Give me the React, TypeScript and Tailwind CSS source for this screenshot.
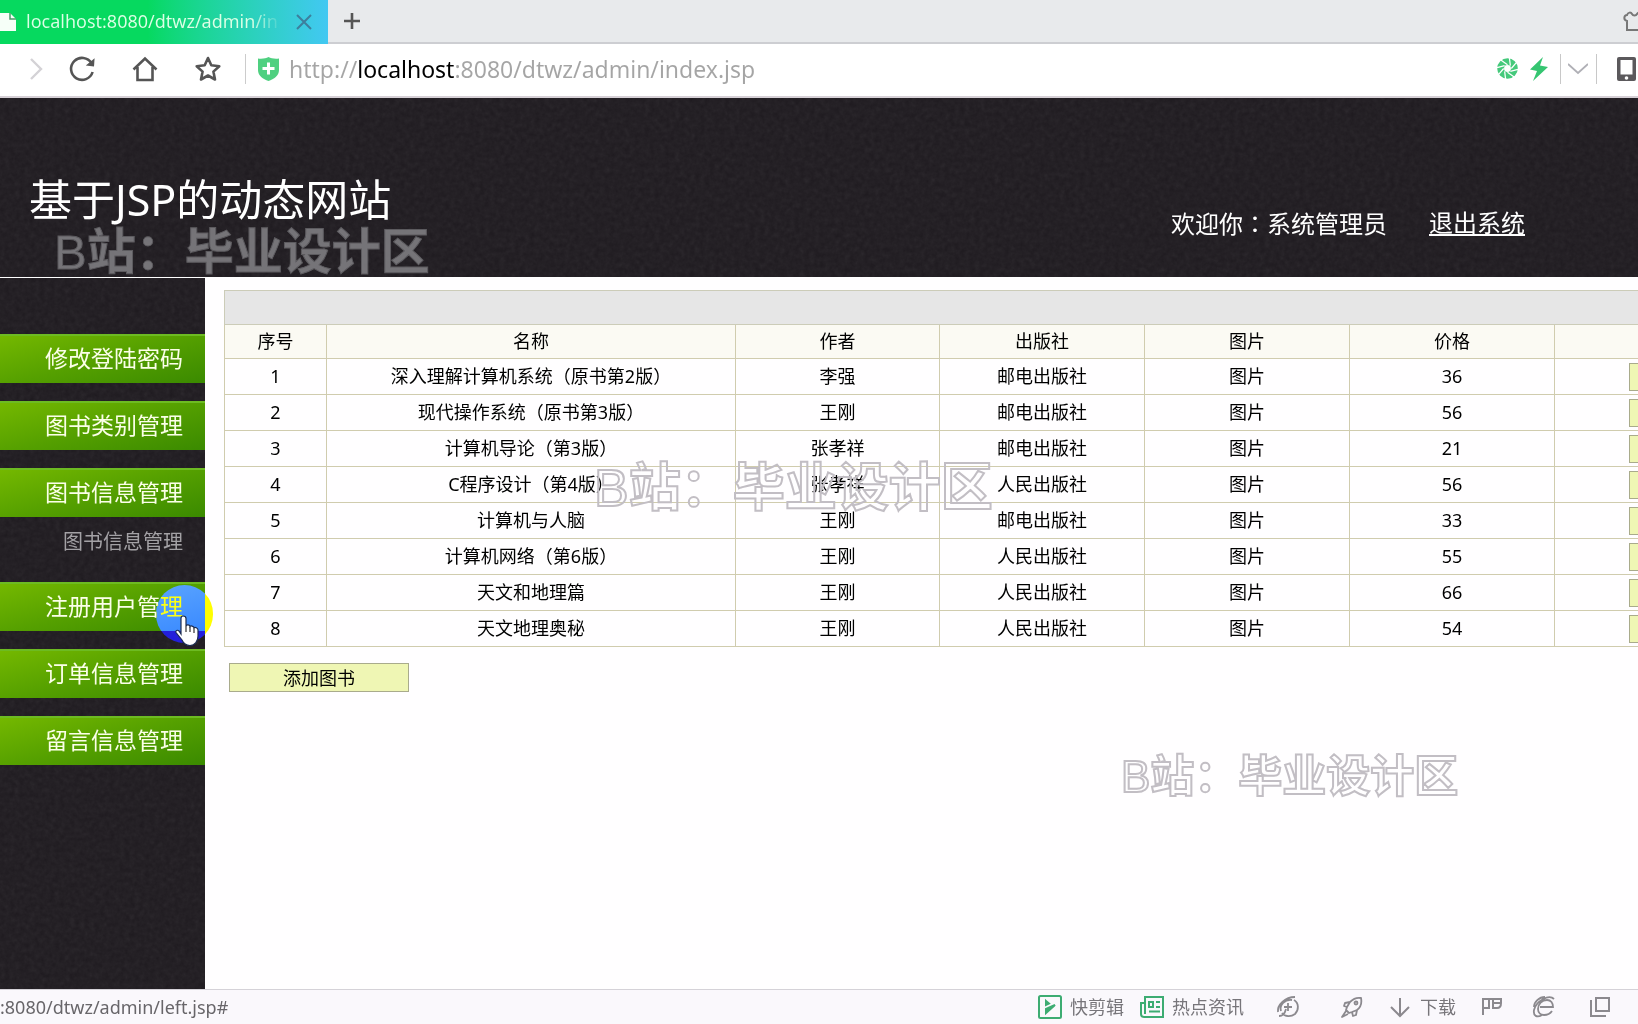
import React from "react";

const menus = [
  { title: "修改登陆密码", children: [] },
  { title: "图书类别管理", children: [] },
  { title: "图书信息管理", children: ["图书信息管理"] },
  { title: "注册用户管理", children: [] },
  { title: "订单信息管理", children: [] },
  { title: "留言信息管理", children: [] },
];

const books = [
  { id: 1, name: "深入理解计算机系统（原书第2版）", author: "李强", press: "邮电出版社", price: 36 },
  { id: 2, name: "现代操作系统（原书第3版）", author: "王刚", press: "邮电出版社", price: 56 },
  { id: 3, name: "计算机导论（第3版）", author: "张孝祥", press: "邮电出版社", price: 21 },
  { id: 4, name: "C程序设计（第4版）", author: "张孝祥", press: "人民出版社", price: 56 },
  { id: 5, name: "计算机与人脑", author: "王刚", press: "邮电出版社", price: 33 },
  { id: 6, name: "计算机网络（第6版）", author: "王刚", press: "人民出版社", price: 55 },
  { id: 7, name: "天文和地理篇", author: "王刚", press: "人民出版社", price: 66 },
  { id: 8, name: "天文地理奥秘", author: "王刚", press: "人民出版社", price: 54 },
];

const Texture = ({ id }: { id: string }) => (
  <svg className="pointer-events-none absolute inset-0 h-full w-full opacity-[0.08]" aria-hidden="true">
    <filter id={id}>
      <feTurbulence type="fractalNoise" baseFrequency="0.2" numOctaves="3" seed="4" />
      <feColorMatrix type="saturate" values="0" />
    </filter>
    <rect width="100%" height="100%" filter={`url(#${id})`} />
  </svg>
);

const TabBar = () => (
  <div className="flex h-11 items-stretch border-b-2 border-[#cdced2] bg-[#e8eaec]">
    <div className="-mb-0.5 flex w-[328px] shrink-0 items-center bg-linear-to-r from-[#06d95f] from-45% to-[#42c8f2]">
      <svg className="h-[18px] w-4 shrink-0" viewBox="0 0 16 18">
        <path d="M0 0h10l6 6v12H0z" fill="#f6fff8" />
        <path d="M10 0v6h6" fill="none" stroke="#4a9a68" strokeWidth="1.5" />
      </svg>
      <span className="ml-2.5 w-[256px] overflow-hidden whitespace-nowrap bg-linear-to-r from-[#dcffe6] from-88% to-transparent bg-clip-text pb-0.5 text-[18px] leading-7 text-transparent">
        localhost:8080/dtwz/admin/in
      </span>
      <button className="ml-3.5 h-4 w-4" aria-label="关闭标签">
        <svg viewBox="0 0 16 16" fill="none" stroke="#3d7f9c" strokeWidth="2">
          <path d="M1 1l14 14M15 1L1 15" />
        </svg>
      </button>
    </div>
    <button className="ml-4 self-center" aria-label="新建标签">
      <svg className="h-4 w-4" viewBox="0 0 16 16" stroke="#555" strokeWidth="2.6">
        <path d="M8 0v16M0 8h16" />
      </svg>
    </button>
    <button className="ml-auto w-[15px] self-center overflow-hidden" aria-label="皮肤">
      <svg className="h-6 w-6 max-w-none" viewBox="0 0 24 24" fill="none" stroke="#777" strokeWidth="2">
        <path d="M9 5C8 3 5 3 4 6c-3 0-4 5 0 6v9h15v-9c4-1 3-6 0-6-1-3-4-3-5-1-1 2-4 2-5 0z" />
      </svg>
    </button>
  </div>
);

const AddressBar = () => (
  <div className="flex h-[54px] items-center border-b-2 border-[#d6d0d6] bg-white pb-[3px]">
    <button className="ml-6 h-6 w-6" aria-label="前进">
      <svg viewBox="0 0 24 24" fill="none" stroke="#d4d2d6" strokeWidth="2.4">
        <path d="M7 2l10 10L7 22" />
      </svg>
    </button>
    <button className="ml-5 h-7 w-7" aria-label="刷新">
      <svg viewBox="0 0 28 28" fill="none" stroke="#555" strokeWidth="2.6">
        <path d="M23.5 8.2A11 11 0 1 0 24.6 17" />
        <path d="M26.6 3.2l-.6 8.2-8.2-.8z" fill="#555" stroke="none" />
      </svg>
    </button>
    <button className="ml-[35px] h-7 w-7" aria-label="主页">
      <svg viewBox="0 0 28 28" fill="none" stroke="#555" strokeWidth="2.6">
        <path d="M2.5 14.5L14 3.5l11.5 11M6.5 12v13h15V12" />
      </svg>
    </button>
    <button className="ml-[35px] h-7 w-7" aria-label="收藏">
      <svg viewBox="0 0 28 28" fill="none" stroke="#555" strokeWidth="2.6" strokeLinejoin="round">
        <path d="M14 3l3.3 7.3 8 .9-5.900 5.400 1.600 7.900-7-4-7 4 1.600-7.900-5.900-5.400 8-.9z" />
      </svg>
    </button>
    <span className="ml-[23px] h-[30px] w-px bg-[#ccc]" />
    <svg className="ml-3 h-6 w-[21px]" viewBox="0 0 21 24">
      <path d="M0 1.5C4 2 8 1.5 10.5 0 13 1.5 17 2 21 1.5V13c0 6-5 9-10.5 11C5 22 0 19 0 13z" fill="#4fd080" />
      <path d="M10.5 5.500v12M4.500 11.500h12" stroke="#fff" strokeWidth="3" />
    </svg>
    <input
      aria-label="地址"
      type="text"
      defaultValue="http://localhost:8080/dtwz/admin/index.jsp"
      className="ml-2.5 min-w-0 flex-1 bg-[linear-gradient(90deg,#a5a5a5_69px,#000_69px,#000_167px,#a5a5a5_167px)] bg-clip-text text-[23px] leading-8 text-transparent outline-none"
    />
    <svg className="h-[21px] w-[21px] shrink-0" viewBox="0 0 22 22" fill="none">
      <circle cx="11" cy="11" r="7.2" stroke="#45c97b" strokeWidth="7.2" />
      <path
        d="M11 7L4 2M14 8L13 0M15 11l5-6M14 14l8-2M11 15l7 5M8 14l1 8M7 11l-5 6M8 8L0 10"
        stroke="#fff"
        strokeWidth="1.3"
      />
    </svg>
    <svg className="ml-3 h-6 w-[18px] shrink-0" viewBox="0 0 18 24">
      <path d="M13 0L0 12.500l7 1.500L3 24l15-14-8-1.500z" fill="#35c571" />
    </svg>
    <span className="ml-3 h-[30px] w-px shrink-0 bg-[#c8c8c8]" />
    <button className="ml-[7px] h-5 w-5 shrink-0" aria-label="展开">
      <svg viewBox="0 0 20 20" fill="none" stroke="#b0b0b6" strokeWidth="1.8">
        <path d="M0 5l10 9 10-9" />
      </svg>
    </button>
    <span className="ml-2 h-[30px] w-px shrink-0 bg-[#c8c8c8]" />
    <button className="ml-5 mr-0.5 shrink-0" aria-label="手机">
      <svg className="h-6 w-[19px]" viewBox="0 0 19 24">
        <rect width="19" height="24" rx="2" fill="#5b595c" />
        <path d="M3.500 3h12v14.500h-12z" fill="#fff" />
        <circle cx="9.500" cy="21" r="1.800" fill="#fff" />
      </svg>
    </button>
  </div>
);

const Watermark = ({ className }: { className: string }) => (
  <div
    className={`pointer-events-none absolute whitespace-nowrap font-['Liberation_Sans','Noto_Sans_CJK_SC',sans-serif] leading-[64px] ${className}`}
  >
    B<span className="font-bold">站：毕业设计区</span>
  </div>
);

const Header = () => (
  <header className="relative flex h-[180px] items-start justify-between border-b border-white bg-[#1e1a1f] pr-[113px] pl-[29px] text-white">
    <Texture id="noise-top" />
    <h1 className="relative mt-[72px] text-[43px] leading-[60px]">基于JSP的动态网站</h1>
    <div className="relative mt-[107px] flex gap-[42px] text-[24px] leading-9">
      <span>
        欢迎你<span className="font-['Noto_Sans_CJK_TC',sans-serif]">：</span>系统管理员
      </span>
      <a href="#" className="underline decoration-2 underline-offset-2">
        退出系统
      </a>
    </div>
    <Watermark className="top-[122px] left-[54px] text-[49px] text-[#8a898d] opacity-80 [-webkit-text-stroke:1px_#6b6a6e]" />
  </header>
);

const Sidebar = () => (
  <nav className="relative w-[205px] shrink-0 bg-[#1e1a1f] pt-14">
    <Texture id="noise-left" />
    <ul className="relative">
      {menus.map((menu) => (
        <li key={menu.title}>
          <a
            href="#"
            className={`block h-[49px] border-t-2 border-[#6dbb22] bg-linear-165 from-[#74b800] via-[#55a000] to-[#3a8a00] pr-[22px] text-right text-[23px] leading-[45px] text-[#fbffe8] ${menu.children.length ? "" : "mb-[18px]"}`}
          >
            {menu.title}
          </a>
          {menu.children.map((child) => (
            <a key={child} href="#" className="block h-[65px] pr-[22px] text-right text-[20px] leading-[50px] text-[#a3a1a5]">
              {child}
            </a>
          ))}
        </li>
      ))}
    </ul>
    {/* click highlight and hand pointer */}
    <span className="pointer-events-none absolute top-[307px] left-[156px] z-10 h-[58px] w-[57px] rounded-full bg-[#0000ff] mix-blend-difference" />
    <svg className="pointer-events-none absolute top-[336px] left-[174px] z-20 h-8 w-[26px]" viewBox="0 0 26 32">
      <path
        d="M9 2c2 0 3 1 3 2.500V12c.5-1.500 3.500-1.500 4 .5.5-1 3.500-.5 4 1.200.8-.7 4 0 4 2.300v6c0 5-3 9.500-8 9.500-4 0-6.500-2-8-5.500L2 18.500c-.8-2 1.500-3 3-1.500l2 3V4.500C7 3 7.500 2 9 2z"
        fill="#fff"
        stroke="#1c2c50"
        strokeWidth="1.2"
      />
      <path d="M12 12v6M16 13v5M20 14v5" stroke="#333" strokeWidth="1.2" />
    </svg>
  </nav>
);

const BookTable = () => (
  <table className="w-full min-w-[1534px] table-fixed border-collapse text-center text-[18px] leading-6 text-black">
    <colgroup>
      <col className="w-[102px]" />
      <col className="w-[409px]" />
      <col className="w-[204px]" />
      <col className="w-[205px]" />
      <col className="w-[205px]" />
      <col className="w-[205px]" />
      <col className="w-[204px]" />
    </colgroup>
    <thead>
      <tr className="h-[34px] bg-[#e6e6e6]">
        <td colSpan={7} className="border border-[#ccccb8]" />
      </tr>
      <tr className="h-[34px] bg-[#fbfaf3]">
        {["序号", "名称", "作者", "出版社", "图片", "价格", "操作"].map((title) => (
          <th key={title} className="border border-[#d0ccae] p-0 pb-0.5 font-normal">
            {title}
          </th>
        ))}
      </tr>
    </thead>
    <tbody>
      {books.map((book) => (
        <tr key={book.id} className="h-9">
          <td className="border border-[#d0ccae] p-0 pb-0.5">{book.id}</td>
          <td className="border border-[#d0ccae] p-0 pb-0.5">{book.name}</td>
          <td className="border border-[#d0ccae] p-0 pb-0.5">{book.author}</td>
          <td className="border border-[#d0ccae] p-0 pb-0.5">{book.press}</td>
          <td className="border border-[#d0ccae] p-0 pb-0.5">图片</td>
          <td className="border border-[#d0ccae] p-0 pb-0.5">{book.price}</td>
          <td className="border border-[#d0ccae] p-0">
            <button className="mx-auto block h-7 w-14 border border-[#a9ab8c] bg-[#eff6b4]">删除</button>
          </td>
        </tr>
      ))}
    </tbody>
  </table>
);

const StatusBar = () => (
  <footer className="flex h-[35px] items-center overflow-hidden border-t border-[#d5d2d8] bg-[#faf8fc] pr-[26px] text-[18px] text-[#77757a]">
    <span className="mr-auto text-[#68666a]">:8080/dtwz/admin/left.jsp#</span>
    <button className="flex items-center gap-2">
      <svg className="h-6 w-6" viewBox="0 0 24 24" fill="none" stroke="#3dac72" strokeWidth="2">
        <rect x="1" y="1" width="22" height="22" rx="1.5" />
        <path d="M8 6l3 2.500L8 10zM17 10L8 18v-4z" fill="#3dac72" />
      </svg>
      快剪辑
    </button>
    <button className="ml-4 flex items-center gap-2">
      <svg className="h-6 w-6" viewBox="0 0 24 24" fill="none" stroke="#3dac72" strokeWidth="2">
        <path d="M5 2h18v20H4c-2 0-3-1-3-3V8h4zM5 8v11" />
        <path d="M9 7h4v5H9zM16 7h4M16 12h4M9 16.500h11" />
      </svg>
      热点资讯
    </button>
    <button className="ml-8" aria-label="加速">
      <svg className="h-6 w-6" viewBox="0 0 24 24" fill="none" stroke="#8b898e" strokeWidth="1.8">
        <path d="M18 5c5 3 5 10 1 14-4 3-10 3-13-1M2 17C1 10 9 2 19 2M5 16C3 10 9 4 16 5M12 8v8M8 12h8M3 21c4 0 6-3 7-7" />
      </svg>
    </button>
    <button className="ml-10" aria-label="火箭">
      <svg className="h-6 w-6" viewBox="0 0 24 24" fill="none" stroke="#8b898e" strokeWidth="1.8" strokeLinejoin="round">
        <path d="M21 3c-5-1-8 1-11 4L5 8l-1 3 3 1-1 3 3 3 3-1 1 4 3-1 1-5c4-3 5-7 4-12zM10 7l-3 5M17 15l-5 2M6 16l-4 6 6-3" />
        <circle cx="16" cy="8" r="1.5" />
      </svg>
    </button>
    <button className="ml-6 flex items-center gap-2">
      <svg className="h-6 w-6" viewBox="0 0 24 24" fill="none" stroke="#8b898e" strokeWidth="2">
        <path d="M12 3v18M3 12l9 9 9-9" />
      </svg>
      下载
    </button>
    <button className="ml-6" aria-label="标记">
      <svg className="h-6 w-6" viewBox="0 0 24 24" fill="none" stroke="#8b898e" strokeWidth="2">
        <path d="M3 20V4h18v4c0 3-1 5-4 5h-4V4M3 13h6V4M13 8h8" />
      </svg>
    </button>
    <button className="ml-7" aria-label="浏览模式">
      <svg className="h-6 w-6" viewBox="0 0 24 24" fill="none" stroke="#8b898e" strokeWidth="1.8">
        <path d="M8 12h13c0-4-2-7-6-7-5 0-9 4-9 9 0 4 3 6 6 6 3 0 6-1 8-4M22 4C17-1 4 6 2 15c-1 6 3 8 8 5M13 2C7 2 2 7 2 12" />
      </svg>
    </button>
    <button className="ml-8" aria-label="窗口">
      <svg className="h-6 w-6" viewBox="0 0 24 24" fill="none" stroke="#8b898e" strokeWidth="2">
        <path d="M8 3h13v13H8zM3 5v16h15" />
      </svg>
    </button>
  </footer>
);

const App = () => {
  return (
    <div className="flex min-h-screen flex-col overflow-hidden bg-white font-['Noto_Sans','Noto_Sans_CJK_SC',sans-serif]">
      <TabBar />
      <AddressBar />
      <Header />
      <div className="flex flex-1">
        <Sidebar />
        <main className="relative min-w-0 flex-1 overflow-x-clip bg-[#fffeff] pt-3 pl-[19px]">
          <BookTable />
          <button className="mt-4 ml-[5px] h-[29px] w-[180px] border border-[#a9ab8c] bg-[#eff6b4] text-[18px] leading-6 text-black">
            添加图书
          </button>
          <Watermark className="top-[178px] left-[389px] text-[52px] text-transparent [-webkit-text-stroke:2px_#c2bec4]" />
          <Watermark className="top-[467px] left-[916px] text-[44px] text-transparent [-webkit-text-stroke:2px_#c2bec4]" />
        </main>
      </div>
      <StatusBar />
    </div>
  );
};

export default App;
